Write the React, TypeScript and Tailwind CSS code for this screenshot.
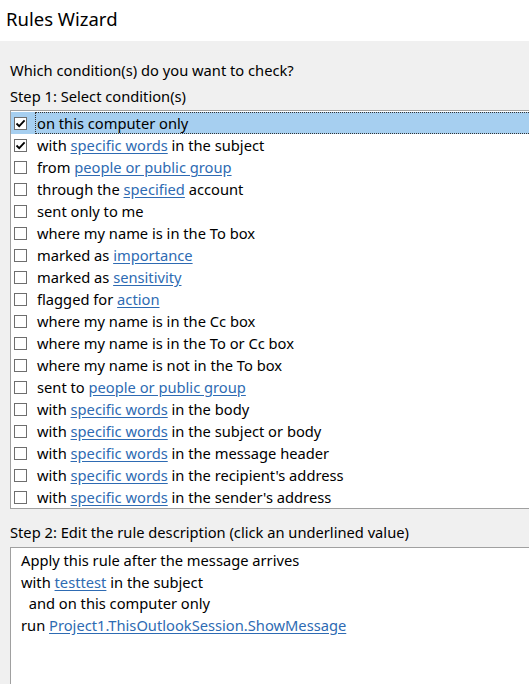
import React from "react";

type Part = string | { link: string };

interface Condition {
  parts: Part[];
  checked: boolean;
}

const conditions: Condition[] = [
  { parts: ["on this computer only"], checked: true },
  { parts: ["with ", { link: "specific words" }, " in the subject"], checked: true },
  { parts: ["from ", { link: "people or public group" }], checked: false },
  { parts: ["through the ", { link: "specified" }, " account"], checked: false },
  { parts: ["sent only to me"], checked: false },
  { parts: ["where my name is in the To box"], checked: false },
  { parts: ["marked as ", { link: "importance" }], checked: false },
  { parts: ["marked as ", { link: "sensitivity" }], checked: false },
  { parts: ["flagged for ", { link: "action" }], checked: false },
  { parts: ["where my name is in the Cc box"], checked: false },
  { parts: ["where my name is in the To or Cc box"], checked: false },
  { parts: ["where my name is not in the To box"], checked: false },
  { parts: ["sent to ", { link: "people or public group" }], checked: false },
  { parts: ["with ", { link: "specific words" }, " in the body"], checked: false },
  { parts: ["with ", { link: "specific words" }, " in the subject or body"], checked: false },
  { parts: ["with ", { link: "specific words" }, " in the message header"], checked: false },
  { parts: ["with ", { link: "specific words" }, " in the recipient's address"], checked: false },
  { parts: ["with ", { link: "specific words" }, " in the sender's address"], checked: false },
];

function Link({ children }: { children: React.ReactNode }) {
  return (
    <span className="text-[#2e6bb3] underline decoration-[#2e6bb3] underline-offset-2">
      {children}
    </span>
  );
}

function renderParts(parts: Part[]) {
  return parts.map((p, i) =>
    typeof p === "string" ? <span key={i}>{p}</span> : <Link key={i}>{p.link}</Link>
  );
}

function Checkbox({ checked }: { checked: boolean }) {
  return (
    <span className="flex h-[13px] w-[13px] shrink-0 items-center justify-center border border-[#6e6e6e] bg-white">
      {checked && (
        <svg width="11" height="11" viewBox="0 0 11 11" fill="none">
          <path d="M1.5 5.5 L4.2 8.2 L9.6 2.4" stroke="#000" strokeWidth="1.8" />
        </svg>
      )}
    </span>
  );
}

export default function App() {
  return (
    <div
      className="h-[684px] w-[529px] overflow-hidden bg-[#f0f0f0] text-[14.7px] text-black"
      style={{ fontFamily: '"Noto Sans", "Open Sans", sans-serif' }}
    >
      <div className="flex h-[41px] items-center bg-white pb-[4px] pl-[6px] text-[18.5px]">
        Rules Wizard
      </div>

      <div className="pl-[10px]">
        <div className="mt-[19px] leading-[20px]">Which condition(s) do you want to check?</div>
        <div className="mt-[6px] leading-[20px]">Step 1: Select condition(s)</div>

        <div className="mt-[4px] w-[560px] border border-[#a0a0a0] bg-white pt-px">
          {conditions.map((c, i) => {
            const selected = i === 0;
            return (
              <div
                key={i}
                className={
                  selected
                    ? "flex h-[22px] items-center bg-[#a6cff0] pl-[3px]"
                    : "flex h-[22px] items-center pl-[3px]"
                }
              >
                <Checkbox checked={c.checked} />
                <div
                  className={
                    selected
                      ? "ml-[8px] flex h-full flex-1 items-center border border-dotted border-[#333] pl-[1px]"
                      : "ml-[10px] flex h-full flex-1 items-center"
                  }
                >
                  <span className="whitespace-pre">{renderParts(c.parts)}</span>
                </div>
              </div>
            );
          })}
        </div>

        <div className="mt-[13px] leading-[20px]">
          Step 2: Edit the rule description (click an underlined value)
        </div>

        <div className="mt-[5px] h-[200px] w-[560px] border border-[#a0a0a0] bg-white pl-[10px] pt-[2px] leading-[21.5px]">
          <div>Apply this rule after the message arrives</div>
          <div>
            with <Link>testtest</Link> in the subject
          </div>
          <div className="whitespace-pre">  and on this computer only</div>
          <div>
            run <Link>Project1.ThisOutlookSession.ShowMessage</Link>
          </div>
        </div>
      </div>
    </div>
  );
}
